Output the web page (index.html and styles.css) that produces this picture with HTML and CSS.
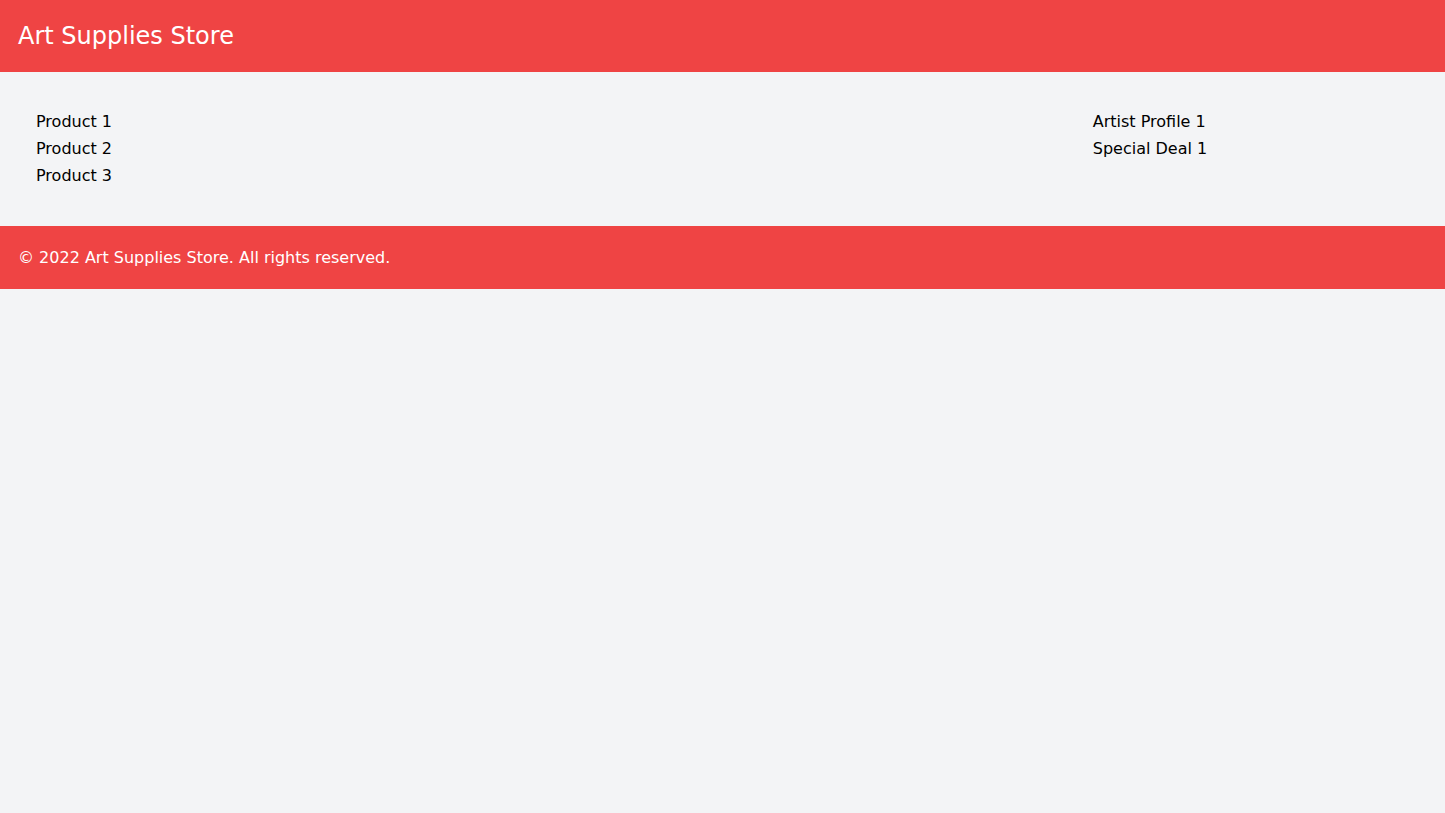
FILE: index.html
```html
<!DOCTYPE html>
<html lang="en">

<head>
    <meta charset="utf-8" />
    <meta name="viewport" content="width=device-width" />
    <title>Art Supplies Store</title>
    <link rel="stylesheet" href="styles.css">
</head>
<body>
    <!-- Header start -->
    <header class="header">
        <h1 class="site-title">Art Supplies Store</h1>
    </header>
    <!-- Header end -->
    <main class="container">
        <section class="products">
            <ul class="item-list">
                <li>Product 1</li>
                <li>Product 2</li>
                <li>Product 3</li>
            </ul>
        </section>
        <aside class="sidebar">
            <ul class="item-list">
                <li>Artist Profile 1</li>
                <li>Special Deal 1</li>
            </ul>
        </aside>
    </main>

    <footer class="footer">
        <p>&copy; 2022 Art Supplies Store. All rights reserved.</p>
    </footer>
</body>

</html>
```

FILE: styles.css
```css
:root {
    --primary-color: #ef4444;
    --bg-color: #f3f4f6;
    --font-family: 'DejaVu Sans', sans-serif;
}

* {
    box-sizing: border-box;
    margin: 0;
    padding: 0;
}

body {
    background-color: var(--bg-color);
    font-family: var(--font-family);
    color: #000;
    font-size: 16px;
    line-height: 27px;
}

.header {
    background-color: var(--primary-color);
    color: #fff;
    padding: 16px 18px;
}

.site-title {
    font-size: 24px;
    font-weight: 400;
    line-height: 40px;
}

.container {
    display: flex;
    padding: 20px 18px 21px;
}

.products {
    width: 75%;
    padding: 16px 18px;
}

.sidebar {
    width: 25%;
    padding: 16px 18px;
}

.item-list {
    list-style: none;
}

.footer {
    background-color: var(--primary-color);
    color: #fff;
    padding: 18px;
}
```
